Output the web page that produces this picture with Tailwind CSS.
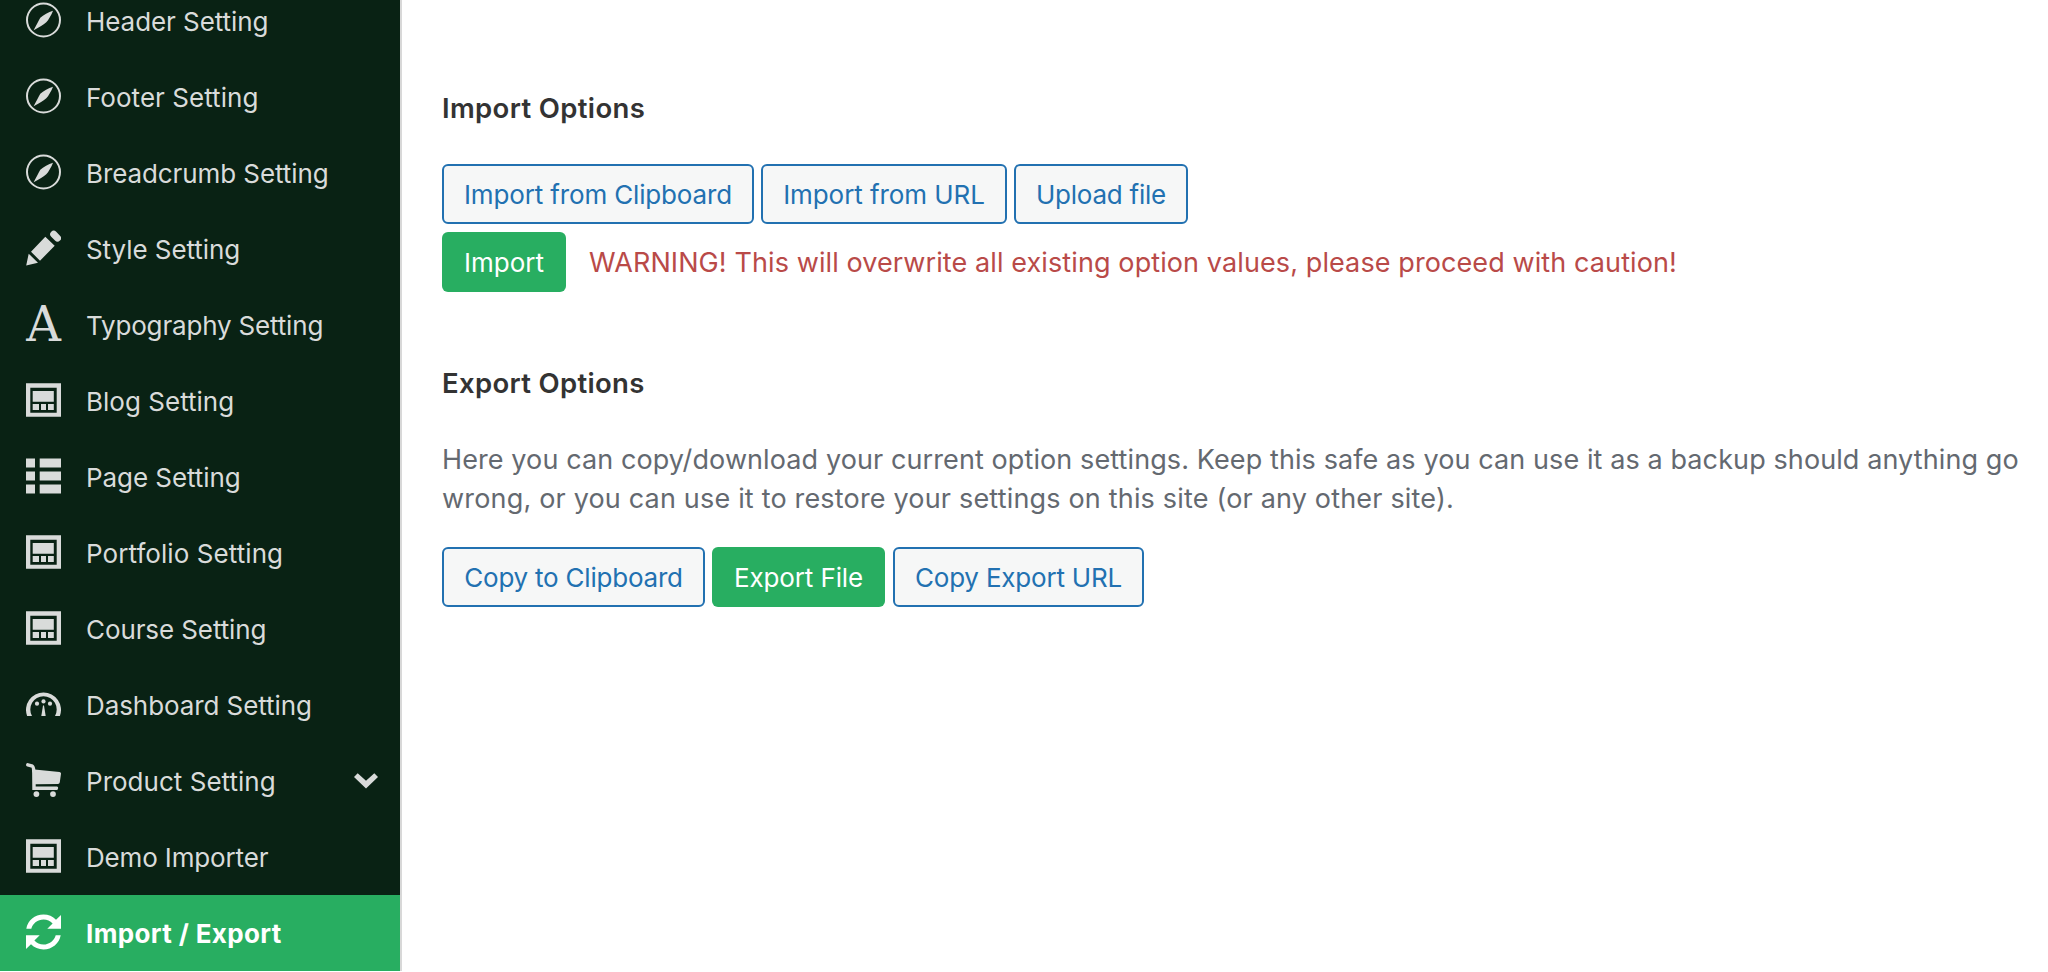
<!DOCTYPE html>
<html lang="en">
<head>
<meta charset="utf-8">
<title>Import / Export</title>
<script src="https://cdn.jsdelivr.net/npm/@tailwindcss/browser@4"></script>
</head>
<body class="flex h-screen overflow-hidden bg-white font-['Inter',sans-serif]">

<svg class="hidden">
  <symbol id="compass" viewBox="0 -0.5 35 36"><circle cx="17.5" cy="17.5" r="16.5" fill="none" stroke="currentColor" stroke-width="2"/><path d="M27 8.2C22.500 9.600 17.300 12.300 14.300 15.300C12.500 18.500 10.500 22.500 7.600 27.700C12.600 25 17.300 22.500 20.300 19.800C22.500 17.300 25.200 12.800 27 8.200Z"/></symbol>
  <symbol id="pencil" viewBox="0 -0.5 35 36"><path d="M27.700 3.700L31.500 7.600" stroke="currentColor" stroke-width="7" stroke-linecap="round"/><path d="M19.300 6.200L28.700 15.300L14 30.200L5 21.200ZM2.700 23.200L12 32.200L.2 35Z"/></symbol>
  <symbol id="layout" viewBox="0 -0.5 35 36"><path fill-rule="evenodd" d="M0 .8H35V34.200H0ZM4.300 5.300V30.200H30.700V5.300Z"/><path d="M6.700 8.500H27.800V19.200H6.700ZM6.700 21.500H13V27.500H6.700ZM15 21.500H20V27.500H15ZM22 21.500H27.800V27.500H22Z"/></symbol>
  <symbol id="list" viewBox="0 -0.5 35 36"><path d="M0 0H9V9H0ZM13.700 0H35V9H13.700ZM0 13H9V22H0ZM13.700 13H35V22H13.700ZM0 26H9V35H0ZM13.700 26H35V35H13.700Z"/></symbol>
  <symbol id="gauge" viewBox="0 -0.5 35 36"><path d="M1.100 29.500A17.500 17.500 0 1 1 33.900 29.500H29A13.200 13.200 0 1 0 6 29.500Z"/><circle cx="11" cy="17.200" r="2.100"/><circle cx="17.500" cy="14.900" r="2.100"/><circle cx="24" cy="17.200" r="2.100"/><path d="M17 19H18L19.700 29.500H15.300Z"/></symbol>
  <symbol id="cart" viewBox="0 -0.5 35 36"><path d="M1.800 2.300L6.400 3.700Q7.400 4.200 7.800 8.500" fill="none" stroke="currentColor" stroke-width="3.400" stroke-linecap="round"/><path d="M6.100 6.800L33.500 9.500Q35.200 9.800 35 11.200L33.800 19.800Q33.500 21.300 32 21.400L9.700 21.800V23.900H31Q32.300 24 32.100 25.800T31 27.600H6.300Z"/><circle cx="10.400" cy="31.600" r="2.900"/><circle cx="27" cy="31.600" r="2.900"/></symbol>
  <symbol id="refresh" viewBox="0 -0.5 35 36"><path id="half" d="M.3 14.200C1.700 6 8.800 0 17.500 0C22.400 0 26.800 1.900 30 5.200L35 .5V14.200H21.300L26.600 9C24.200 6.400 21.100 4.900 17.500 4.900C11.800 4.900 6.700 8.700 5.300 14.200Z"/><use href="#half" transform="rotate(180 17.500 17.500)"/></symbol>
</svg>

<aside class="h-[971px] w-[402px] shrink-0 border-r-2 border-[#d8d8d8] bg-[#092214] text-[26px] text-[#d9dbda]">
  <nav class="-mt-[17px] flex flex-col">
    <a class="flex h-[76px] items-center gap-[25px] pl-[26px]"><svg class="mb-[2px] h-9 w-[35px] fill-current"><use href="#compass"/></svg><span class="pt-[1px] tracking-[-0.06px]">Header Setting</span></a>
    <a class="flex h-[76px] items-center gap-[25px] pl-[26px]"><svg class="mb-[2px] h-9 w-[35px] fill-current"><use href="#compass"/></svg><span class="pt-[1px] tracking-[0.04px]">Footer Setting</span></a>
    <a class="flex h-[76px] items-center gap-[25px] pl-[26px]"><svg class="mb-[2px] h-9 w-[35px] fill-current"><use href="#compass"/></svg><span class="pt-[1px] tracking-[-0.09px]">Breadcrumb Setting</span></a>
    <a class="flex h-[76px] items-center gap-[25px] pl-[26px]"><svg class="mb-[2px] h-9 w-[35px] fill-current"><use href="#pencil"/></svg><span class="pt-[1px] tracking-[-0.06px]">Style Setting</span></a>
    <a class="flex h-[76px] items-center gap-[25px] pl-[26px]"><span class="mb-[2px] flex size-[35px] items-center justify-center font-['DejaVu_Serif',serif] text-[48px] leading-none">A</span><span class="pt-[1px] tracking-[-0.17px]">Typography Setting</span></a>
    <a class="flex h-[76px] items-center gap-[25px] pl-[26px]"><svg class="mb-[2px] h-9 w-[35px] fill-current"><use href="#layout"/></svg><span class="pt-[1px] tracking-[0.02px]">Blog Setting</span></a>
    <a class="flex h-[76px] items-center gap-[25px] pl-[26px]"><svg class="mb-[2px] h-9 w-[35px] fill-current"><use href="#list"/></svg><span class="pt-[1px] tracking-[-0.07px]">Page Setting</span></a>
    <a class="flex h-[76px] items-center gap-[25px] pl-[26px]"><svg class="mb-[2px] h-9 w-[35px] fill-current"><use href="#layout"/></svg><span class="pt-[1px] tracking-[0.07px]">Portfolio Setting</span></a>
    <a class="flex h-[76px] items-center gap-[25px] pl-[26px]"><svg class="mb-[2px] h-9 w-[35px] fill-current"><use href="#layout"/></svg><span class="pt-[1px] tracking-[-0.1px]">Course Setting</span></a>
    <a class="flex h-[76px] items-center gap-[25px] pl-[26px]"><svg class="mb-[2px] h-9 w-[35px] fill-current"><use href="#gauge"/></svg><span class="pt-[1px] tracking-[-0.08px]">Dashboard Setting</span></a>
    <a class="flex h-[76px] items-center gap-[25px] pr-[22px] pl-[26px]"><svg class="mb-[2px] h-9 w-[35px] fill-current"><use href="#cart"/></svg><span class="pt-[1px] tracking-[0.02px]">Product Setting</span><svg class="ml-auto h-4 w-6 fill-current" viewBox="0 0 24 16"><path d="M3.700 .2L12 7.800L20.300 .2L24 4L12 15.500L0 4Z"/></svg></a>
    <a class="flex h-[76px] items-center gap-[25px] pl-[26px]"><svg class="mb-[2px] h-9 w-[35px] fill-current"><use href="#layout"/></svg><span class="pt-[1px] tracking-[-0.15px]">Demo Importer</span></a>
    <a class="flex h-[76px] items-center gap-[25px] bg-[#28ae61] pl-[26px] font-bold text-white"><svg class="mb-[2px] h-9 w-[35px] fill-current"><use href="#refresh"/></svg><span class="pt-[1px] tracking-[0.36px]">Import / Export</span></a>
  </nav>
</aside>

<main class="flex-1 pt-[90px] pl-10 text-[26px]">
  <h2 class="text-[27.5px] leading-9 font-semibold tracking-[0.35px] text-[#333]">Import Options</h2>
  <div class="mt-[38px] flex gap-[7px] text-[#2271b1]">
    <button class="h-[60px] w-[312px] rounded-md border-2 border-[#2271b1] bg-[#f6f7f7] tracking-[-0.15px] whitespace-nowrap">Import from Clipboard</button>
    <button class="h-[60px] w-[246px] rounded-md border-2 border-[#2271b1] bg-[#f6f7f7] tracking-[-0.07px] whitespace-nowrap">Import from URL</button>
    <button class="h-[60px] w-[174px] rounded-md border-2 border-[#2271b1] bg-[#f6f7f7] tracking-[-0.24px] whitespace-nowrap">Upload file</button>
  </div>
  <div class="mt-2 flex items-center gap-[23px]">
    <button class="h-[60px] w-[124px] rounded-md bg-[#28ae61] text-white">Import</button>
    <p class="pt-[2px] text-[27px] tracking-[0.1px] whitespace-nowrap text-[#b94a48]">WARNING! This will overwrite all existing option values, please proceed with caution!</p>
  </div>
  <h2 class="mt-[73px] text-[27.5px] leading-9 font-semibold tracking-[0.32px] text-[#333]">Export Options</h2>
  <p class="mt-[39px] text-[27px] leading-[39px] tracking-[0.1px] whitespace-nowrap text-[#646970]">Here you can copy/download your current option settings. Keep this safe as you can use it as a backup should anything go<br><span class="tracking-[0.18px]">wrong, or you can use it to restore your settings on this site (or any other site).</span></p>
  <div class="mt-[29px] flex text-[#2271b1]">
    <button class="h-[60px] w-[263px] rounded-md border-2 border-[#2271b1] bg-[#f6f7f7] tracking-[-0.22px] whitespace-nowrap">Copy to Clipboard</button>
    <button class="ml-[7px] h-[60px] w-[173px] rounded-md bg-[#28ae61] tracking-[-0.13px] whitespace-nowrap text-white">Export File</button>
    <button class="ml-2 h-[60px] w-[251px] rounded-md border-2 border-[#2271b1] bg-[#f6f7f7] tracking-[-0.2px] whitespace-nowrap">Copy Export URL</button>
  </div>
</main>
</body>
</html>
